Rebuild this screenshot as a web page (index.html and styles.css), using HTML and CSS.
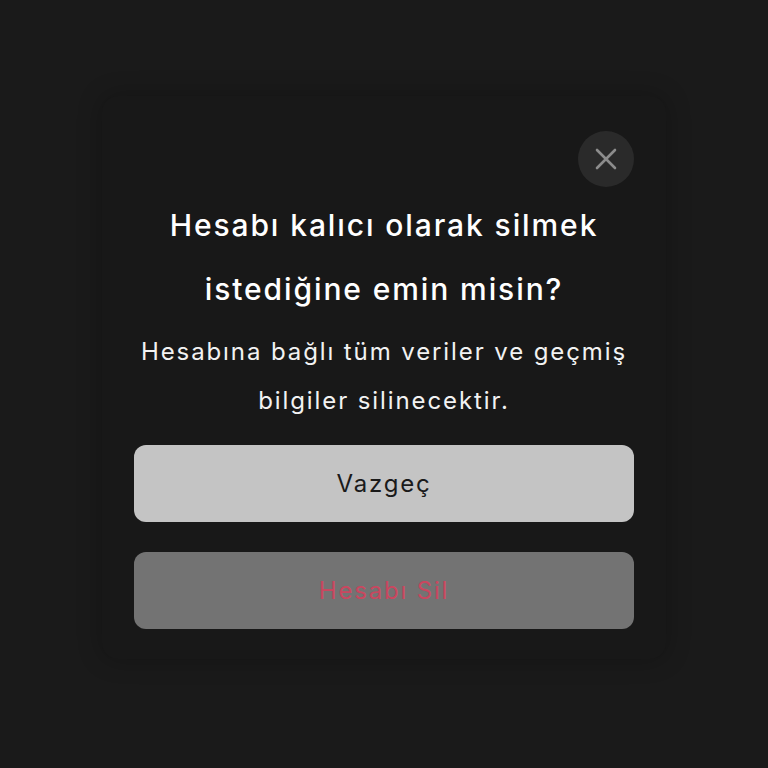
FILE: index.html
```html
<!DOCTYPE html>
<html lang="tr">
<head>
<meta charset="utf-8">
<title>Hesabı Sil</title>
<link rel="stylesheet" href="styles.css">
</head>
<body>
	<div class="page">
		<div class="dialog">
			<div class="dialogTop">
				<button class="closeButton" aria-label="Kapat">
					<svg width="24" height="24" viewBox="0 0 24 24">
						<path d="M3 3 L21 21 M21 3 L3 21" stroke="#8c8c8c" stroke-width="2.6" stroke-linecap="round" fill="none"/>
					</svg>
				</button>
			</div>
			<h2 class="dialogTitle">Hesabı kalıcı olarak silmek istediğine emin misin?</h2>
			<p class="dialogText">Hesabına bağlı tüm veriler ve geçmiş bilgiler silinecektir.</p>
			<div class="dialogButtons">
				<button class="btn btnCancel">Vazgeç</button>
				<button class="btn btnDelete">Hesabı Sil</button>
			</div>
		</div>
	</div>
</body>
</html>
```

FILE: styles.css
```css
* {
	box-sizing: border-box;
}

body {
	margin: 0;
	background: #1a1a1a;
	font-family: "Inter", "Noto Sans", sans-serif;
}

.page {
	height: 768px;
	padding-top: 96px;
	display: flex;
	justify-content: center;
	align-items: flex-start;
}

.dialog {
	width: 564px;
	background: #181818;
	border-radius: 16px;
	box-shadow: 0 0 24px rgba(0, 0, 0, 0.25);
	padding: 35px 32px 30px;
	display: flex;
	flex-direction: column;
}

.dialogTop {
	display: flex;
	justify-content: flex-end;
}

.closeButton {
	width: 56px;
	height: 56px;
	border-radius: 50%;
	border: none;
	background: #2a2a2a;
	display: flex;
	align-items: center;
	justify-content: center;
	padding: 0;
}

.dialogTitle {
	margin: 6px 0 0;
	color: #ffffff;
	font-size: 30px;
	font-weight: 500;
	letter-spacing: 1.9px;
	line-height: 64px;
	text-align: center;
	padding: 0 20px;
}

.dialogText {
	margin: 6px 0 0;
	color: #f2f2f2;
	font-size: 24px;
	font-weight: 400;
	letter-spacing: 1.9px;
	line-height: 49px;
	text-align: center;
}

.dialogButtons {
	margin-top: 20px;
	display: flex;
	flex-direction: column;
	gap: 30px;
}

.btn {
	width: 500px;
	height: 77px;
	border: none;
	border-radius: 12px;
	font-family: inherit;
	font-size: 24px;
	letter-spacing: 1.8px;
}

.btnCancel {
	background: #c4c4c4;
	color: #1a1a1a;
}

.btnDelete {
	background: #737373;
	color: #c9475f;
}
```
